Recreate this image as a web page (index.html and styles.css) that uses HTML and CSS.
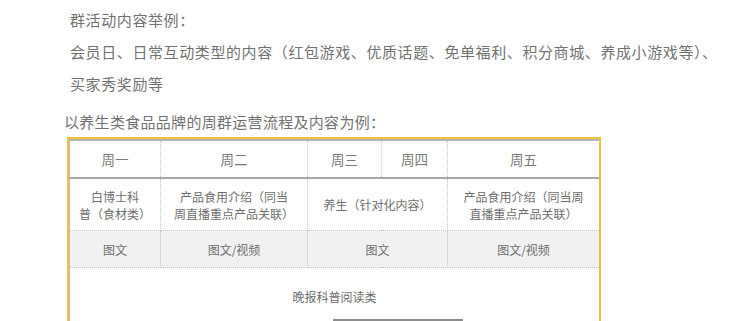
FILE: index.html
```html
<!DOCTYPE html>
<html lang="zh-CN">
<head>
<meta charset="utf-8">
<link rel="stylesheet" href="styles.css">
</head>
<body>
<div class="intro">
  <p class="line">群活动内容举例：</p>
  <p class="line">会员日、日常互动类型的内容（红包游戏、优质话题、免单福利、积分商城、养成小游戏等）、</p>
  <p class="line">买家秀奖励等</p>
</div>
<p class="caption">以养生类食品品牌的周群运营流程及内容为例：</p>
<div class="frame">
  <table class="plan">
    <colgroup>
      <col class="c1"><col class="c2"><col class="c3"><col class="c4"><col class="c5">
    </colgroup>
    <tr class="head">
      <th>周一</th><th>周二</th><th>周三</th><th>周四</th><th>周五</th>
    </tr>
    <tr class="topic">
      <td>白博士科<br>普（食材类）</td>
      <td>产品食用介绍（同当<br>周直播重点产品关联）</td>
      <td colspan="2">养生（针对化内容）</td>
      <td>产品食用介绍（同当周<br>直播重点产品关联）</td>
    </tr>
    <tr class="form">
      <td>图文</td>
      <td>图文/视频</td>
      <td colspan="2">图文</td>
      <td>图文/视频</td>
    </tr>
    <tr class="evening">
      <td colspan="5">
        <div class="evening-text">晚报科普阅读类</div>
        <div class="shot"></div>
      </td>
    </tr>
  </table>
</div>
</body>
</html>
```

FILE: styles.css
```css
html, body {
  margin: 0;
  padding: 0;
  background: #ffffff;
}
body {
  font-family: "Noto Sans CJK SC", "Noto Sans", sans-serif;
  color: #666666;
  width: 730px;
  height: 321px;
  overflow: hidden;
}
.intro {
  padding-top: 4px;
  margin-left: 70px;
}
.line {
  margin: 0;
  font-size: 15px;
  letter-spacing: 0.6px;
  line-height: 32px;
  white-space: nowrap;
  color: #727272;
}
.caption {
  margin: 7px 0 0 64px;
  font-size: 15px;
  letter-spacing: 0.3px;
  line-height: 30px;
  color: #727272;
}
.frame {
  margin-left: 67px;
  width: 530px;
  border: 2px solid #f2c038;
  border-bottom: none;
  height: 182px;
  overflow: hidden;
}
.plan {
  width: 530px;
  table-layout: fixed;
  border-collapse: collapse;
  border-top: 2px solid #b4b4b4;
  font-size: 12px;
  color: #6e6e6e;
}
.c1 { width: 91px; }
.c2 { width: 147px; }
.c3 { width: 74px; }
.c4 { width: 66px; }
.c5 { width: 152px; }
.plan th, .plan td {
  border: 1px dotted #c4c4c4;
  text-align: center;
  vertical-align: middle;
  padding: 0;
  line-height: 17px;
}
.plan th {
  font-weight: normal;
  font-size: 13.5px;
  color: #7a7a7a;
  height: 36px;
  border-bottom: 2px solid #a8a8a8;
  border-top: none;
}
.plan tr > :first-child { border-left: 1px solid #c0c0c0; }
.plan tr > :last-child { border-right: 1px solid #c0c0c0; }
.topic td { height: 51px; }
.form td {
  height: 36px;
  background: #f1f1f1;
}
.evening td {
  vertical-align: top;
  border-bottom: none;
}
.evening-text {
  padding-top: 20px;
  line-height: 17px;
}
.shot {
  margin: 14px 0 0 263px;
  width: 130px;
  height: 0;
  border-top: 2px solid #8c8c8c;
}
```
